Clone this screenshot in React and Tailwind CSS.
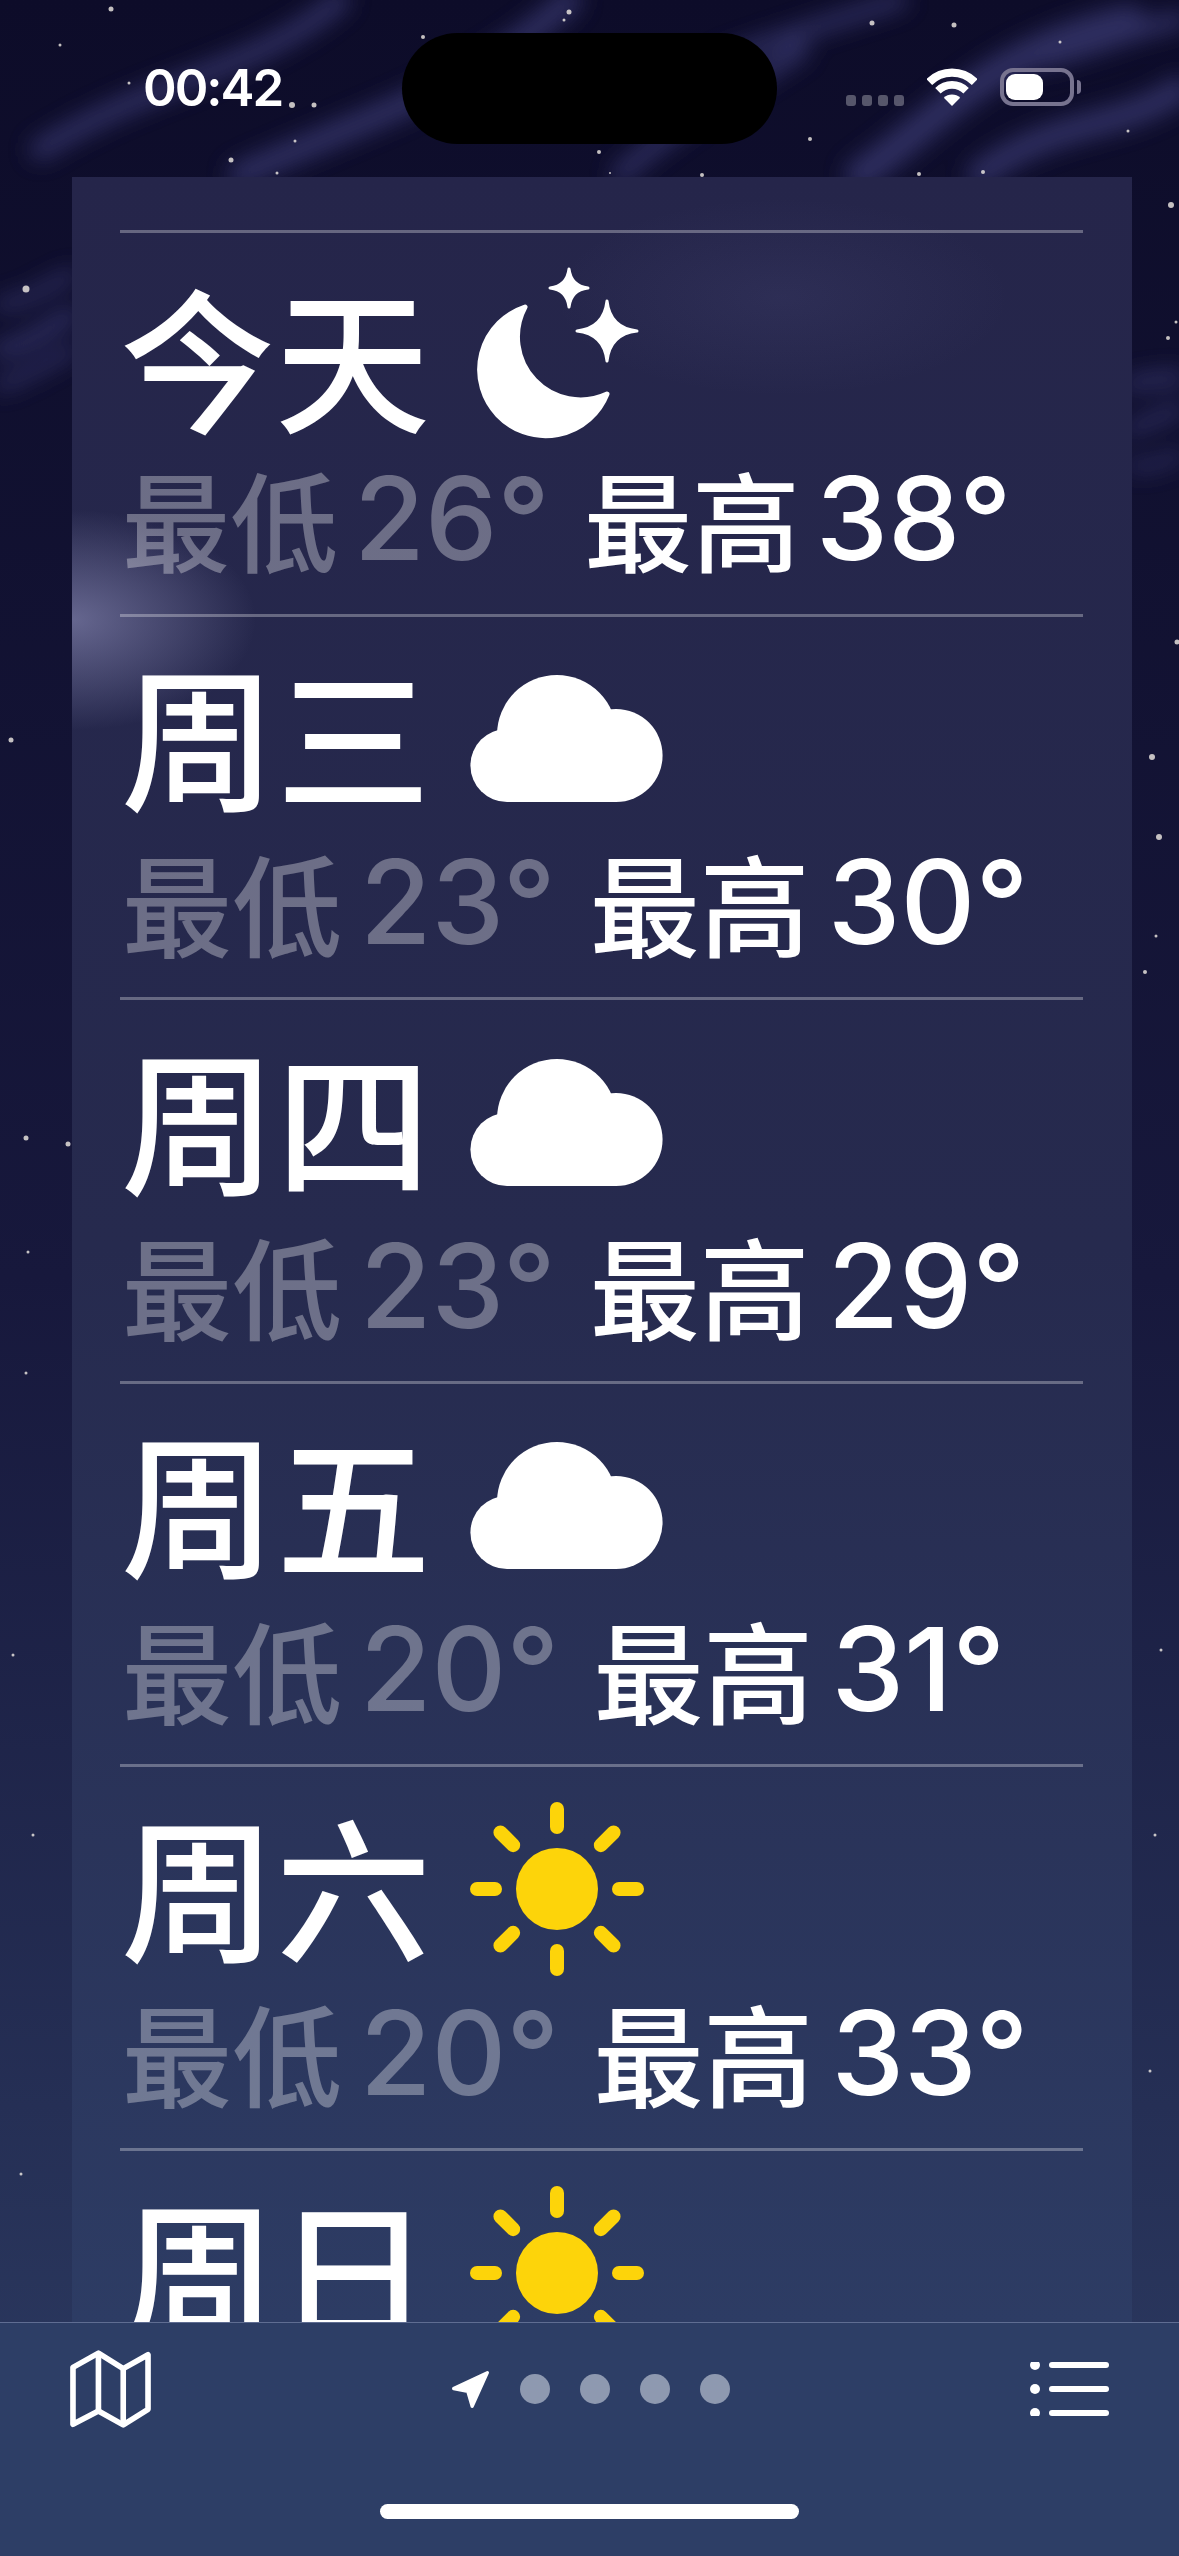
const stars = [
  [111, 9, 2.5], [569, 12, 2.5], [564, 20, 1.5], [872, 23, 2.5], [954, 25, 2.5], [1060, 42, 1.5], [423, 37, 2],
  [60, 45, 1.5], [129, 83, 1.5], [292, 105, 3], [314, 105, 2.5], [295, 141, 1.5], [231, 160, 2.5], [277, 173, 1.5],
  [599, 152, 2], [810, 139, 2], [1128, 131, 1.5], [919, 174, 2], [983, 172, 2], [702, 175, 2], [610, 173, 1],
  [26, 289, 3.5], [11, 740, 2.5], [26, 1138, 2.5], [68, 1144, 2.5], [1171, 205, 3], [1176, 322, 1.5], [1168, 338, 2],
  [1177, 642, 2.5], [1152, 757, 3], [1159, 837, 3], [1156, 936, 1.5], [1145, 972, 2], [28, 1252, 1.5], [26, 1373, 1.5],
  [13, 1655, 1.5], [33, 1835, 1.5], [21, 2174, 1.5], [1161, 1650, 1.5], [1155, 1835, 1.5], [1150, 2071, 1.5],
];

const wisps = [
  ["M40 150 C150 80 260 70 340 0", 20],
  ["M240 175 C360 120 470 90 570 0", 24],
  ["M620 175 C680 120 740 90 800 50", 18],
  ["M860 175 C940 120 990 50 1130 20", 30],
  ["M720 60 C800 30 840 20 900 0", 16],
  ["M980 175 C1050 120 1120 130 1179 90", 26],
  ["M1040 60 C1090 50 1130 30 1179 20", 18],
  ["M0 350 C30 345 50 325 72 315", 16],
  ["M0 305 C20 305 50 285 72 275", 12],
  ["M0 385 C30 375 50 360 72 350", 12],
  ["M1130 385 C1150 378 1165 380 1179 378", 14],
  ["M1130 430 C1150 420 1165 415 1179 410", 12],
  ["M1130 465 C1150 470 1165 460 1179 455", 10],
];

const days = [
  { name: "今天", icon: "moon", low: "26°", high: "38°", shift: "mb-[2px] pl-[0px]", gap: "gap-[16px]", cjk: "text-[108px]", num: "text-[115px]" },
  { name: "周三", icon: "cloud", low: "23°", high: "30°", shift: "mb-[13px] pl-[1px]", gap: "gap-[18px]", cjk: "text-[110px]", num: "text-[116px]" },
  { name: "周四", icon: "cloud", low: "23°", high: "29°", shift: "mb-[13px] pl-[1px]", gap: "gap-[18px]", cjk: "text-[110px]", num: "text-[116px]" },
  { name: "周五", icon: "cloud", low: "20°", high: "31°", shift: "mb-[13px] pl-[1px]", gap: "gap-[18px]", cjk: "text-[110px]", num: "text-[116px]" },
  { name: "周六", icon: "sun", low: "20°", high: "33°", shift: "mb-[13px] pl-[1px]", gap: "gap-[18px]", cjk: "text-[110px]", num: "text-[116px]" },
  { name: "周日", icon: "sun", low: "", high: "", shift: "mb-[13px] pl-[1px]", gap: "gap-[18px]", cjk: "text-[110px]", num: "text-[116px]" },
];

function Backdrop() {
  return (
    <svg className="absolute inset-0" width="1179" height="2556" viewBox="0 0 1179 2556" fill="none">
      <defs>
        <filter id="soft" x="-30%" y="-30%" width="160%" height="160%">
          <feGaussianBlur stdDeviation="11" />
        </filter>
      </defs>
      <g filter="url(#soft)" stroke="#3c3c78" strokeLinecap="round" opacity="0.7">
        {wisps.map(([d, w]) => (
          <path key={d} d={d} strokeWidth={w} />
        ))}
      </g>
      {stars.map(([x, y, r]) => (
        <circle key={`${x}-${y}`} cx={x} cy={y} r={r} fill="#f2eee6" opacity="0.8" />
      ))}
    </svg>
  );
}

function Wifi() {
  return (
    <svg width="50" height="38" viewBox="0 0 49 37" fill="none">
      <path d="M2.2 13.7A31.5 31.5 0 0 1 46.8 13.7" stroke="white" strokeWidth="8" />
      <path d="M10.7 22.2A19.5 19.5 0 0 1 38.3 22.2" stroke="white" strokeWidth="7.5" />
      <path d="M24.5 37L16.5 29A11.5 11.5 0 0 1 32.5 29Z" fill="white" />
    </svg>
  );
}

function StatusBar() {
  return (
    <div className="relative h-[177px] flex items-start text-white">
      <div className="w-[402px] pl-[143px] pt-[57px] font-['Inter',sans-serif] font-semibold text-[51px] leading-[62px] tracking-[-2px]">
        00:42
      </div>
      <div className="mt-[33px] w-[375px] h-[111px] rounded-full bg-black" />
      <div className="flex items-end h-[38px] mt-[68px] ml-[69px]">
        <div className="flex gap-[6px]">
          <div className="w-[10px] h-[11px] rounded-[3px] bg-white/30" />
          <div className="w-[10px] h-[11px] rounded-[3px] bg-white/30" />
          <div className="w-[10px] h-[11px] rounded-[3px] bg-white/30" />
          <div className="w-[10px] h-[11px] rounded-[3px] bg-white/30" />
        </div>
        <div className="ml-[23px]">
          <Wifi />
        </div>
        <div className="ml-[23px] w-[74px] h-[38px] rounded-[13px] border-[4px] border-[#77738f] p-[2px]">
          <div className="w-[37px] h-full rounded-[9px] bg-white" />
        </div>
        <div className="ml-[3px] mb-[12px] w-[4px] h-[14px] rounded-r-full bg-[#77738f]" />
      </div>
    </div>
  );
}

function Moon() {
  return (
    <svg width="175" height="180" viewBox="0 3 175 180" fill="white" stroke="white" strokeLinejoin="round">
      <path d="M55 45A66 66 0 1 0 137 132A63 63 0 0 1 55 45Z" strokeWidth="5" />
      <path d="M99 7Q101 24 118 26Q101 28 99 45Q97 28 80 26Q97 24 99 7Z" strokeWidth="3" />
      <path d="M137 39Q140 66 167 69Q140 72 137 99Q134 72 107 69Q134 66 137 39Z" strokeWidth="3" />
    </svg>
  );
}

function Cloud() {
  return (
    <svg width="193" height="127" viewBox="0 0 578 382" fill="white">
      <circle cx="110" cy="272" r="110" />
      <circle cx="260" cy="180" r="180" />
      <circle cx="438" cy="242" r="140" />
      <rect x="110" y="200" width="328" height="182" />
    </svg>
  );
}

function Sun() {
  const rays = [0, 45, 90, 135, 180, 225, 270, 315];
  return (
    <svg width="174" height="174" viewBox="0 0 174 174">
      <circle cx="87" cy="87" r="41" fill="#fdd40a" />
      {rays.map((a) => (
        <line
          key={a}
          x1="87"
          y1="7"
          x2="87"
          y2="25"
          stroke="#fdd40a"
          strokeWidth="14"
          strokeLinecap="round"
          transform={`rotate(${a} 87 87)`}
        />
      ))}
    </svg>
  );
}

function DayRow({ day }) {
  return (
    <div className="h-[383.6px] shrink-0">
      <div className="h-[3px] bg-white/30" />
      <div className="h-[200px] mt-[22px] flex items-center text-white">
        <div className={`w-[350px] font-['Noto_Sans_CJK_SC',sans-serif] font-medium text-[155px] leading-[170px] ${day.shift}`}>
          {day.name}
        </div>
        {day.icon === "moon" && <Moon />}
        {day.icon === "cloud" && <Cloud />}
        {day.icon === "sun" && <Sun />}
      </div>
      {day.low && (
        <div className="flex items-center h-[124px] pl-[2px] gap-[34px] font-['Inter',sans-serif]">
          <div className={`flex items-center ${day.gap} text-white/[0.33]`}>
            <span className={`${day.cjk} leading-[124px] font-medium font-['Noto_Sans_CJK_SC',sans-serif]`}>最低</span>
            <span className={`${day.num} leading-[124px] font-medium pt-[3px]`}>{day.low}</span>
          </div>
          <div className={`flex items-center ${day.gap} text-white`}>
            <span className={`${day.cjk} leading-[124px] font-medium font-['Noto_Sans_CJK_SC',sans-serif]`}>最高</span>
            <span className={`${day.num} leading-[124px] font-medium pt-[3px]`}>{day.high}</span>
          </div>
        </div>
      )}
    </div>
  );
}

function Toolbar() {
  return (
    <div className="relative h-[234px] border-t border-[#5f6d92] bg-[#2d3e66] px-[70px] pt-[27px]">
      <div className="flex items-center justify-between">
        <svg width="81" height="78" viewBox="59 56 245 235" fill="none" stroke="white" strokeWidth="17" strokeLinejoin="round">
          <path d="M68 108L145 65L220 112L295 70V235L220 282L145 240L68 280Z" />
          <path d="M145 65V240M220 112V282" />
        </svg>
        <div className="flex items-center gap-[30px]">
          <svg width="39" height="39" viewBox="56 56 118 118" fill="white" stroke="white" strokeWidth="10" strokeLinejoin="round">
            <path d="M64 112L166 64L120 166L107 121Z" />
          </svg>
          <div className="w-[30px] h-[30px] rounded-full bg-[#8e99b0]" />
          <div className="w-[30px] h-[30px] rounded-full bg-[#8e99b0]" />
          <div className="w-[30px] h-[30px] rounded-full bg-[#8e99b0]" />
          <div className="w-[30px] h-[30px] rounded-full bg-[#8e99b0]" />
        </div>
        <svg width="79" height="54" viewBox="0 0 79 54" fill="white">
          <circle cx="5" cy="3" r="5" />
          <circle cx="5" cy="27" r="5" />
          <circle cx="5" cy="51" r="5" />
          <rect x="19" y="0" width="60" height="6" rx="3" />
          <rect x="19" y="24" width="60" height="6" rx="3" />
          <rect x="19" y="48" width="60" height="6" rx="3" />
        </svg>
      </div>
      <div className="mt-[76px] mx-auto w-[419px] h-[15px] rounded-full bg-white" />
    </div>
  );
}

export default function App() {
  return (
    <div className="relative w-[1179px] h-[2556px] overflow-hidden flex flex-col bg-gradient-to-b from-[#0d0c29] via-[#17183c] to-[#2d3c63]">
      <Backdrop />
      <StatusBar />
      <div className="relative flex-1 min-h-0 overflow-hidden ml-[72px] mr-[47px] pl-[48px] pr-[49px] pt-[53px] bg-gradient-to-b from-[#25254a] via-[#262a4e] to-[#2d3c64]">
        <div className="absolute left-[-200px] top-[323px] w-[400px] h-[240px] rounded-full bg-[radial-gradient(ellipse_at_center,rgba(165,165,210,0.5),rgba(165,165,210,0.2)_40%,transparent_65%)]" />
        <div className="absolute left-[480px] top-[20px] w-[460px] h-[200px] rounded-full bg-[radial-gradient(ellipse_at_center,rgba(120,120,180,0.1),transparent_70%)]" />
        <div className="relative flex flex-col">
          {days.map((day) => (
            <DayRow key={day.name} day={day} />
          ))}
        </div>
      </div>
      <Toolbar />
    </div>
  );
}
